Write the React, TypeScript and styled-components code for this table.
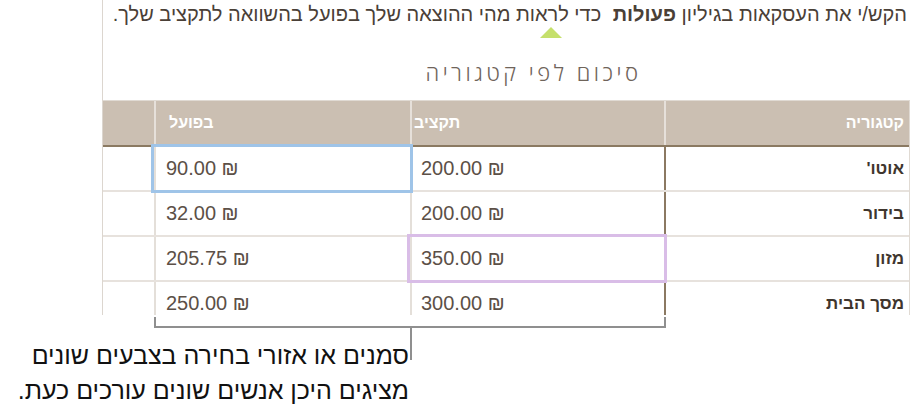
import styled, { createGlobalStyle } from "styled-components";

const GlobalStyle = createGlobalStyle`
  html, body {
    margin: 0;
    padding: 0;
    background: #ffffff;
  }
  body {
    font-family: "Liberation Sans", "DejaVu Sans", sans-serif;
  }
`;

const Page = styled.div`
  width: 916px;
  height: 419px;
  overflow: hidden;
`;

const Sheet = styled.div`
  margin-left: 102px;
  width: 807px;
  height: 315px;
  border-left: 1px solid #dcd6cf;
  overflow: hidden;
  direction: rtl;
  display: flex;
  flex-direction: column;
`;

const Intro = styled.p`
  margin: 0;
  padding-right: 3px;
  font-size: 20px;
  line-height: 28px;
  color: #4a4037;
  white-space: nowrap;
  b {
    font-weight: 700;
    margin-left: 6px;
  }
`;

const PointerRow = styled.div`
  display: flex;
  justify-content: center;
  padding-left: 88px;
  margin-top: -1px;
`;

const Pointer = styled.div`
  width: 0;
  height: 0;
  border-left: 11px solid transparent;
  border-right: 11px solid transparent;
  border-bottom: 11px solid #c5e06c;
`;

const Title = styled.h2`
  margin: 22px 0 0;
  padding-left: 54px;
  text-align: center;
  font-family: "Open Sans", "Liberation Sans", sans-serif;
  font-size: 22px;
  font-weight: 300;
  line-height: 24px;
  letter-spacing: 3.5px;
  color: #6f645a;
`;

const Table = styled.div`
  margin-top: 16px;
  border-top: 1px solid #e0dad3;
  border-right: 1px solid #e0dad3;
`;

const Row = styled.div<{ $head?: boolean }>`
  display: grid;
  grid-template-columns: 245px 254px 256px 1fr;
  height: ${(p) => (p.$head ? 44 : 43)}px;
  background: ${(p) => (p.$head ? "#cbbfb2" : "#ffffff")};
  border-bottom: 2px solid ${(p) => (p.$head ? "#8b7a62" : "#e7e2dd")};
`;

const Cell = styled.div<{
  $num?: boolean;
  $pad?: number;
  $line?: string;
  $sel?: string;
}>`
  display: flex;
  align-items: center;
  justify-content: ${(p) => (p.$num ? "flex-end" : "flex-start")};
  padding: 0 ${(p) => p.$pad ?? 5}px;
  border-left: 2px solid ${(p) => p.$line ?? "#e4dfd9"};
  ${(p) =>
    p.$sel
      ? `position: relative; z-index: 1; outline: 3px solid ${p.$sel};`
      : ""}
`;

const HeadText = styled.span`
  font-size: 16px;
  font-weight: 700;
  color: #ffffff;
`;

const Category = styled.span`
  font-size: 17px;
  font-weight: 700;
  color: #3f362e;
`;

const Amount = styled.span`
  direction: ltr;
  font-size: 20px;
  color: #5c5047;
`;

const Blank = styled.div``;

const Annotation = styled.div`
  display: flex;
  flex-direction: column;
`;

const Bracket = styled.div`
  margin: 2px 0 0 154px;
  width: 508px;
  height: 9px;
  border: 2px solid #8f8f8f;
  border-top: none;
`;

const Callout = styled.div`
  width: 412px;
  display: flex;
  justify-content: flex-end;
  align-items: flex-start;
`;

const Caption = styled.p`
  margin: 10px 1px 0 0;
  direction: rtl;
  text-align: right;
  font-size: 25px;
  line-height: 35px;
  color: #111111;
  white-space: nowrap;
`;

const Stem = styled.div`
  width: 2px;
  height: 32px;
  flex-shrink: 0;
  background: #8f8f8f;
`;

const rows = [
  { cat: "אוטו'", budget: "200.00", actual: "90.00" },
  { cat: "בידור", budget: "200.00", actual: "32.00" },
  { cat: "מזון", budget: "350.00", actual: "205.75" },
  { cat: "מסך הבית", budget: "300.00", actual: "250.00" },
];

export default function App() {
  return (
    <Page>
      <GlobalStyle />
      <Sheet>
        <Intro>
          הקש/י את העסקאות בגיליון <b>פעולות</b> כדי לראות מהי ההוצאה שלך בפועל
          בהשוואה לתקציב שלך.
        </Intro>
        <PointerRow>
          <Pointer />
        </PointerRow>
        <Title>סיכום לפי קטגוריה</Title>
        <Table>
          <Row $head>
            <Cell $line="#e6e0da">
              <HeadText>קטגוריה</HeadText>
            </Cell>
            <Cell $num $pad={2} $line="#e6e0da">
              <HeadText>תקציב</HeadText>
            </Cell>
            <Cell $num $pad={13} $line="#e6e0da">
              <HeadText>בפועל</HeadText>
            </Cell>
            <Blank />
          </Row>
          {rows.map((r, i) => (
            <Row key={r.cat}>
              <Cell $line="#8b7962">
                <Category>{r.cat}</Category>
              </Cell>
              <Cell $num $pad={9} $sel={i === 2 ? "#d9bde7" : undefined}>
                <Amount>{r.budget} ₪</Amount>
              </Cell>
              <Cell $num $pad={10} $sel={i === 0 ? "#9fc4e8" : undefined}>
                <Amount>{r.actual} ₪</Amount>
              </Cell>
              <Blank />
            </Row>
          ))}
        </Table>
      </Sheet>
      <Annotation>
        <Bracket />
        <Callout>
          <Caption>
            סמנים או אזורי בחירה בצבעים שונים
            <br />
            מציגים היכן אנשים שונים עורכים כעת.
          </Caption>
          <Stem />
        </Callout>
      </Annotation>
    </Page>
  );
}
